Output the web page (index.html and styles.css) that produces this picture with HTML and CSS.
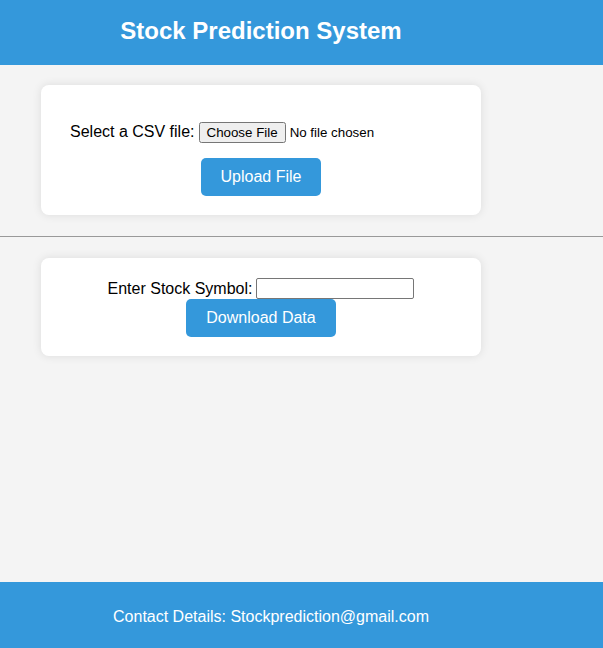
FILE: index.html
```html
<!DOCTYPE html>
<html>
<head>
<meta charset="utf-8">
<link rel="stylesheet" href="styles.css">
</head>
<body>
<header class="site-header">
  <h1 class="title">Stock Prediction System</h1>
</header>
<main class="main">
  <section class="card card-upload">
    <div class="file-row">
      <label class="label" for="csv">Select a CSV file:</label>
      <input type="file" id="csv" class="file-input">
    </div>
    <div class="btn-row">
      <button class="btn">Upload File</button>
    </div>
  </section>
  <hr class="divider">
  <section class="card card-download">
    <div class="symbol-row">
      <label class="label" for="sym">Enter Stock Symbol:</label>
      <input type="text" id="sym" class="text-input">
    </div>
    <button class="btn">Download Data</button>
  </section>
</main>
<footer class="site-footer">
  <p class="contact">Contact Details: Stockprediction@gmail.com</p>
</footer>
</body>
</html>
```
FILE: styles.css
```css
html, body {
  margin: 0;
  padding: 0;
}
body {
  background: #f4f4f4;
  font-family: "Liberation Sans", Arial, sans-serif;
  font-size: 16px;
  color: #000;
  min-height: 100vh;
  display: flex;
  flex-direction: column;
}
.site-header {
  background: #3498db;
  color: #fff;
  padding: 17px 81px 20px 0;
  text-align: center;
}
.title {
  margin: 0;
  font-size: 24px;
  line-height: 28px;
  font-weight: bold;
}
.main {
  flex: 1;
  padding-top: 20px;
}
.card {
  background: #fff;
  width: 440px;
  box-sizing: border-box;
  margin-left: 41px;
  border-radius: 8px;
  box-shadow: 0 0 10px rgba(0, 0, 0, 0.1);
}
.card-upload {
  padding: 37px 20px 19px 29px;
}
.file-row {
  display: flex;
  align-items: center;
  height: 20px;
}
.label {
  margin-right: 4px;
}
.file-input {
  font-family: "Liberation Sans", Arial, sans-serif;
  font-size: 13.33px;
}
.btn-row {
  margin-top: 16px;
  padding-right: 9px;
  display: flex;
  justify-content: center;
}
.btn {
  background: #3498db;
  color: #fff;
  border: none;
  border-radius: 5px;
  padding: 10px 20px;
  font-family: "Liberation Sans", Arial, sans-serif;
  font-size: 16px;
  line-height: 18px;
  cursor: pointer;
}
.divider {
  margin: 21px 0 0;
  border: none;
  border-top: 1px solid #999;
  height: 0;
}
.card-download {
  margin-top: 21px;
  padding: 20px 20px 19px;
  display: flex;
  flex-direction: column;
  align-items: center;
}
.symbol-row {
  display: flex;
  align-items: center;
  height: 21px;
}
.text-input {
  width: 158px;
  height: 21px;
  box-sizing: border-box;
  border: 1px solid #767676;
  border-radius: 2px;
  padding: 1px 2px;
  margin: 0;
}
.site-footer {
  background: #3498db;
  color: #fff;
  padding: 26px 61px 22px 0;
  text-align: center;
}
.contact {
  margin: 0;
  line-height: 18px;
}
```
